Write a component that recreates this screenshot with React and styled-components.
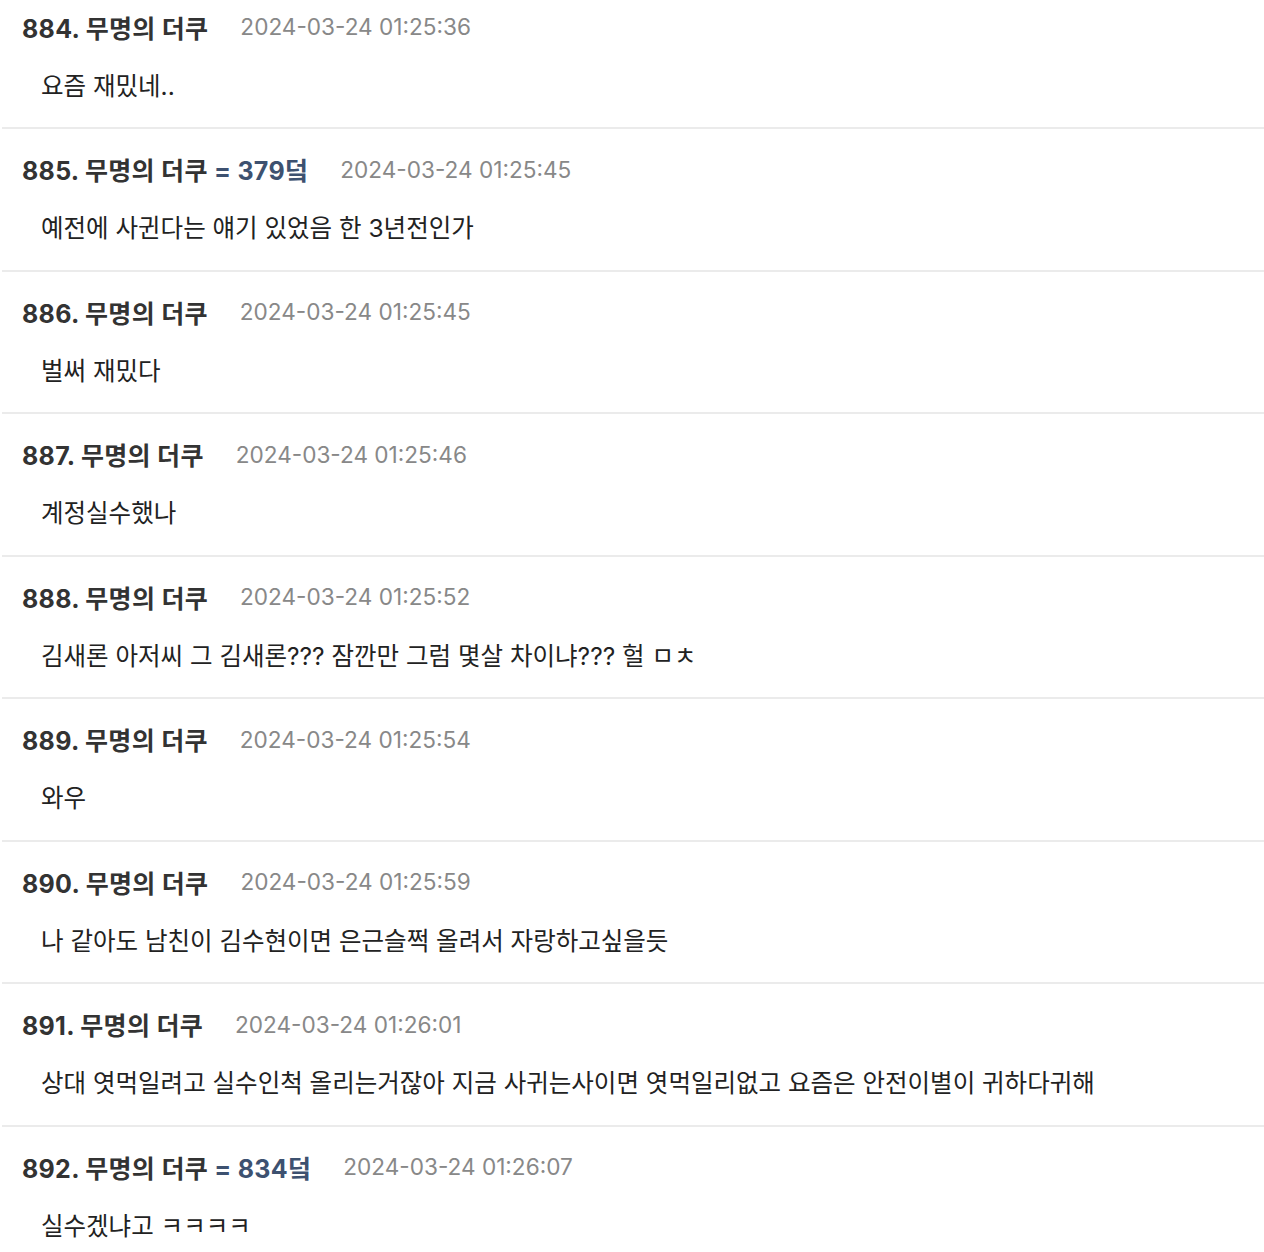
import React from 'react';
import styled, { createGlobalStyle } from 'styled-components';

const comments = [
  { no: 884, name: '무명의 더쿠', date: '2024-03-24 01:25:36', text: '요즘 재밌네..' },
  { no: 885, name: '무명의 더쿠', score: 379, date: '2024-03-24 01:25:45', text: '예전에 사귄다는 얘기 있었음 한 3년전인가' },
  { no: 886, name: '무명의 더쿠', date: '2024-03-24 01:25:45', text: '벌써 재밌다' },
  { no: 887, name: '무명의 더쿠', date: '2024-03-24 01:25:46', text: '계정실수했나' },
  { no: 888, name: '무명의 더쿠', date: '2024-03-24 01:25:52', text: '김새론 아저씨 그 김새론??? 잠깐만 그럼 몇살 차이냐??? 헐 ㅁㅊ' },
  { no: 889, name: '무명의 더쿠', date: '2024-03-24 01:25:54', text: '와우' },
  { no: 890, name: '무명의 더쿠', date: '2024-03-24 01:25:59', text: '나 같아도 남친이 김수현이면 은근슬쩍 올려서 자랑하고싶을듯' },
  { no: 891, name: '무명의 더쿠', date: '2024-03-24 01:26:01', text: '상대 엿먹일려고 실수인척 올리는거잖아 지금 사귀는사이면 엿먹일리없고 요즘은 안전이별이 귀하다귀해' },
  { no: 892, name: '무명의 더쿠', score: 834, date: '2024-03-24 01:26:07', text: '실수겠냐고 ㅋㅋㅋㅋ' },
];

const GlobalStyle = createGlobalStyle`
  body {
    margin: 0;
    background: #fff;
    font-family: "Inter", "Noto Sans CJK KR", sans-serif;
    overflow: hidden;
  }
`;

const App = () => {
  return (
    <>
      <GlobalStyle />
      <CommentList>
        {comments.map((c) => (
          <CommentItem key={c.no}>
            <CommentHeader>
              <Author>
                {c.no}. {c.name}
                {c.score && <Score> = {c.score}덬</Score>}
              </Author>
              <DateText>{c.date}</DateText>
            </CommentHeader>
            <CommentBody>{c.text}</CommentBody>
          </CommentItem>
        ))}
      </CommentList>
    </>
  );
};

const CommentList = styled.div`
  display: flex;
  flex-direction: column;
  margin-top: -13.5px;
`;

const CommentItem = styled.div`
  padding: 23px 0 24.5px 0;
  margin-left: 2px;
  border-bottom: 2px solid #ebebeb;
`;

const CommentHeader = styled.div`
  display: flex;
  align-items: center;
  gap: 32px;
  height: 34px;
  padding-left: 20px;
`;

const Author = styled.div`
  font-size: 25px;
  font-weight: 700;
  color: #333;
  letter-spacing: 0.3px;
`;

const Score = styled.span`
  color: #3d5170;
`;

const DateText = styled.div`
  font-size: 22.6px;
  color: #888;
`;

const CommentBody = styled.div`
  margin-top: 25px;
  height: 34px;
  line-height: 34px;
  padding-left: 39px;
  font-size: 24.5px;
  color: #222;
`;

export default App;
